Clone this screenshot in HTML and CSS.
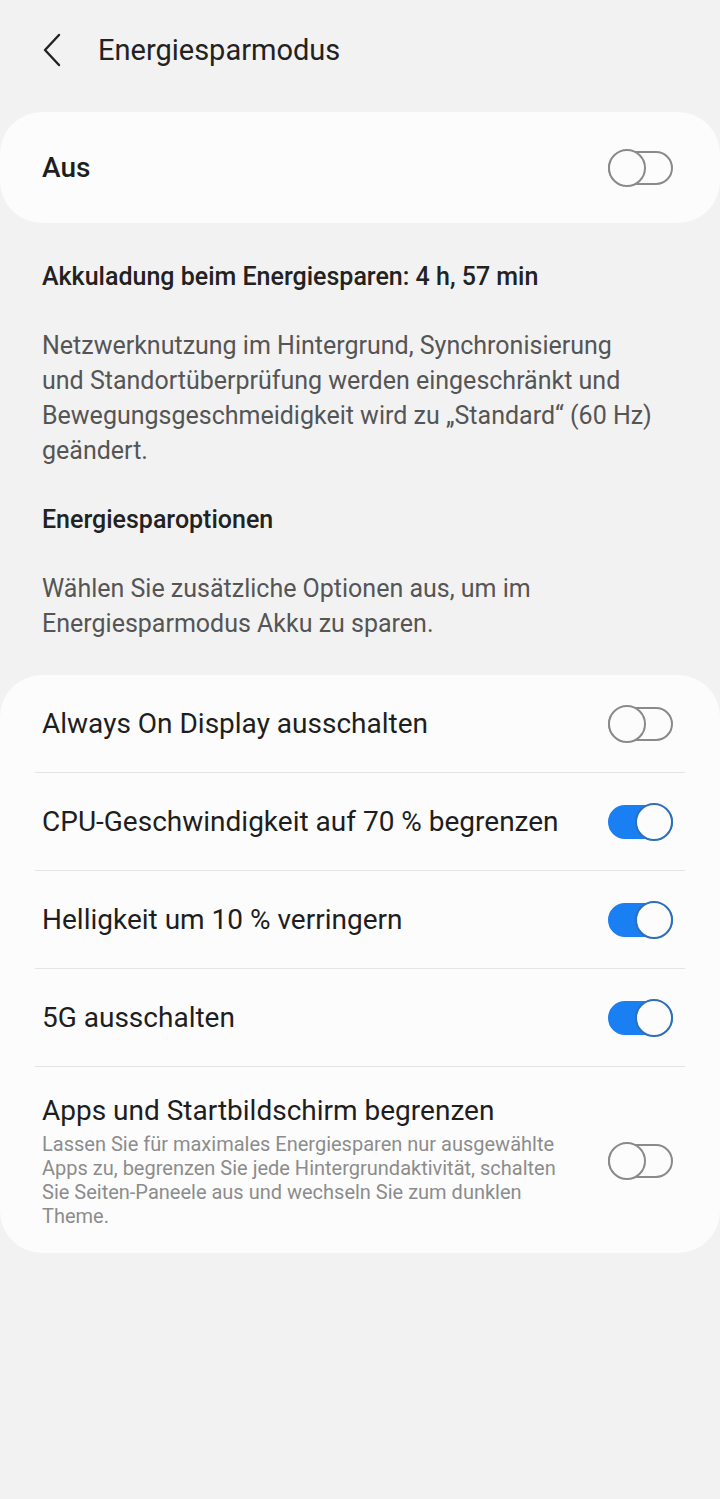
FILE: index.html
```html
<!DOCTYPE html>
<html lang="de">
<head>
  <meta charset="UTF-8">
  <meta name="viewport" content="width=device-width, initial-scale=1.0">
  <title>Energiesparmodus</title>
  <link rel="stylesheet" href="styles.css">
</head>
<body>
  <div class="header">
    <button class="back" aria-label="Zurück">
      <svg width="24" height="36" viewBox="0 0 24 36">
        <path d="M19 3 L5 18 L19 33" fill="none" stroke="#222" stroke-width="2.4" stroke-linecap="round" stroke-linejoin="round"/>
      </svg>
    </button>
    <h1>Energiesparmodus</h1>
  </div>

  <div class="card master">
    <span class="master-label">Aus</span>
    <span class="switch"></span>
  </div>

  <div class="info">
    <h2>Akkuladung beim Energiesparen: 4 h, 57 min</h2>
    <p>Netzwerknutzung im Hintergrund, Synchronisierung und Standortüberprüfung werden eingeschränkt und Bewegungsgeschmeidigkeit wird zu „Standard“ (60 Hz) geändert.</p>
    <h2>Energiesparoptionen</h2>
    <p>Wählen Sie zusätzliche Optionen aus, um im Energiesparmodus Akku zu sparen.</p>
  </div>

  <div class="card options">
    <div class="row">
      <span class="row-title">Always On Display ausschalten</span>
      <span class="switch"></span>
    </div>
    <div class="row">
      <span class="row-title">CPU-Geschwindigkeit auf 70 % begrenzen</span>
      <span class="switch on"></span>
    </div>
    <div class="row">
      <span class="row-title">Helligkeit um 10 % verringern</span>
      <span class="switch on"></span>
    </div>
    <div class="row">
      <span class="row-title">5G ausschalten</span>
      <span class="switch on"></span>
    </div>
    <div class="row tall">
      <div class="row-text">
        <span class="row-title">Apps und Startbildschirm begrenzen</span>
        <span class="row-sub">Lassen Sie für maximales Energiesparen nur ausgewählte Apps zu, begrenzen Sie jede Hintergrundaktivität, schalten Sie Seiten-Paneele aus und wechseln Sie zum dunklen Theme.</span>
      </div>
      <span class="switch"></span>
    </div>
  </div>
</body>
</html>
```

FILE: styles.css
```css
body {
  margin: 0;
  padding: 0;
  background-color: #f2f2f2;
  font-family: Roboto, "Noto Sans", sans-serif;
  color: #1e1e1e;
}

.header {
  display: flex;
  align-items: center;
  height: 100px;
  padding-left: 40px;
}

.back {
  display: flex;
  background: none;
  border: none;
  padding: 0;
  margin-right: 34px;
  cursor: pointer;
}

h1 {
  margin: 0;
  font-size: 29px;
  font-weight: 400;
  color: #222;
}

.card {
  background-color: #fcfcfc;
  border-radius: 42px;
}

.master {
  display: flex;
  align-items: center;
  justify-content: space-between;
  height: 111px;
  margin-top: 12px;
  padding: 0 47px 0 42px;
}

.master-label {
  font-size: 28px;
  font-weight: 500;
}

.info {
  padding: 36px 62px 34px 42px;
}

.info h2 {
  margin: 0 0 34px;
  font-size: 25px;
  line-height: 35px;
  font-weight: 500;
  color: #222;
}

.info p {
  margin: 0 0 34px;
  font-size: 25px;
  line-height: 35px;
  color: #555;
}

.info p:last-child {
  margin-bottom: 0;
}

.options {
  padding: 0 35px;
}

.row {
  display: flex;
  align-items: center;
  justify-content: space-between;
  height: 97px;
  padding: 0 12px 0 7px;
  border-bottom: 1px solid #e4e4e4;
}

.row:last-child {
  border-bottom: none;
}

.row.tall {
  height: auto;
  padding-top: 27px;
  padding-bottom: 25px;
}

.row-text {
  display: flex;
  flex-direction: column;
  max-width: 525px;
}

.row-title {
  font-size: 28px;
  line-height: 34px;
}

.row-sub {
  margin-top: 4px;
  font-size: 20px;
  line-height: 24px;
  color: #8c8c8c;
}

/* toggle switches */
.switch {
  position: relative;
  flex-shrink: 0;
  width: 65px;
  height: 38px;
}

.switch::before {
  content: "";
  position: absolute;
  left: 0;
  right: 0;
  top: 2px;
  bottom: 2px;
  border: 2.5px solid #8a8a8a;
  border-radius: 17px;
  box-sizing: border-box;
}

.switch::after {
  content: "";
  position: absolute;
  left: 0;
  top: 0;
  width: 38px;
  height: 38px;
  border: 2.5px solid #8a8a8a;
  border-radius: 50%;
  background-color: #fcfcfc;
  box-sizing: border-box;
}

.switch.on::before {
  background-color: #1a7ff2;
  border-color: #1a7ff2;
}

.switch.on::after {
  left: auto;
  right: 0;
  border-color: #2f6fb8;
}
```
